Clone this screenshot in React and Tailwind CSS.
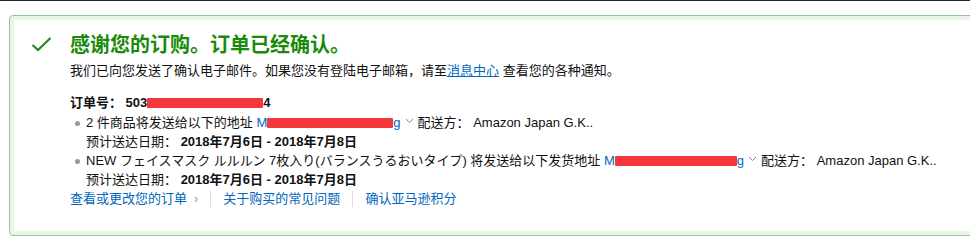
import React from "react";

const FONT = { fontFamily: '"Liberation Sans", "Noto Sans CJK SC", sans-serif' };

function Redact({ w, className = "" }) {
  return <span className={`inline-block h-[10px] bg-[#f2383c] align-[-1px] rounded-[1px] ${className}`} style={{ width: w }} />;
}

function Chevron() {
  return (
    <svg width="9" height="6" viewBox="0 0 9 6" className="mx-[4px] inline-block align-[3px]">
      <path d="M1 1 L4.5 4.5 L8 1" fill="none" stroke="#888" strokeWidth="1" />
    </svg>
  );
}

function Shipment({ children, dates }) {
  return (
    <li className="flex">
      <span className="mt-[8px] mr-[6px] ml-[5px] h-[5px] w-[5px] shrink-0 rounded-full bg-[#999]" />
      <div>
        <div className="whitespace-nowrap">{children}</div>
        <div>
          预计送达日期： <b className="font-bold">{dates}</b>
        </div>
      </div>
    </li>
  );
}

export default function App() {
  return (
    <div className="h-[236px] w-[970px] overflow-hidden bg-white text-[13px] leading-[19px] text-[#111]" style={FONT}>
      <div className="h-px bg-[#23232b]" />
      <div className="ml-[9px] mt-[14px] h-[221px] w-[1000px] rounded-[4px] border border-[#94c592] shadow-[inset_0_0_0_4px_#e9f6e7]">
        <div className="flex pt-[16px]">
          <div className="w-[60px] shrink-0">
            <svg width="24" height="20" viewBox="0 0 24 20" className="ml-[20px] mt-[3px]">
              <path d="M2.5 10 L8 15 L20.5 3" fill="none" stroke="#1e8a1c" strokeWidth="2.2" />
            </svg>
          </div>
          <div>
            <h4 className="text-[20px] font-bold leading-[26px] text-[#1a8a0a]">感谢您的订购。订单已经确认。</h4>
            <p className="mt-[3px]">
              我们已向您发送了确认电子邮件。如果您没有登陆电子邮箱，请至<a className="text-[#0066c0] underline">消息中心</a> 查看您的各种通知。
            </p>
            <div className="mt-[13px] font-bold">
              订单号： 503<Redact w={116} />4
            </div>
            <ul className="mt-[1px]">
              <Shipment dates="2018年7月6日 - 2018年7月8日">
                2 件商品将发送给以下的地址 <span className="text-[#0066c0]">M<Redact w={126} />g</span>
                <Chevron />配送方： Amazon Japan G.K..
              </Shipment>
              <Shipment dates="2018年7月6日 - 2018年7月8日">
                NEW フェイスマスク ルルルン 7枚入り(バランスうるおいタイプ) 将发送给以下发货地址{" "}
                <span className="text-[#0066c0]">M<Redact w={122} />g</span>
                <Chevron />配送方： Amazon Japan G.K..
              </Shipment>
            </ul>
            <div className="flex items-center text-[#0066c0]">
              <a>查看或更改您的订单</a>
              <span className="ml-[7px] text-[#999]">›</span>
              <span className="mx-[12px] h-[16px] w-px bg-[#ddd]" />
              <a>关于购买的常见问题</a>
              <span className="mx-[12px] h-[16px] w-px bg-[#ddd]" />
              <a>确认亚马逊积分</a>
            </div>
          </div>
        </div>
      </div>
    </div>
  );
}
